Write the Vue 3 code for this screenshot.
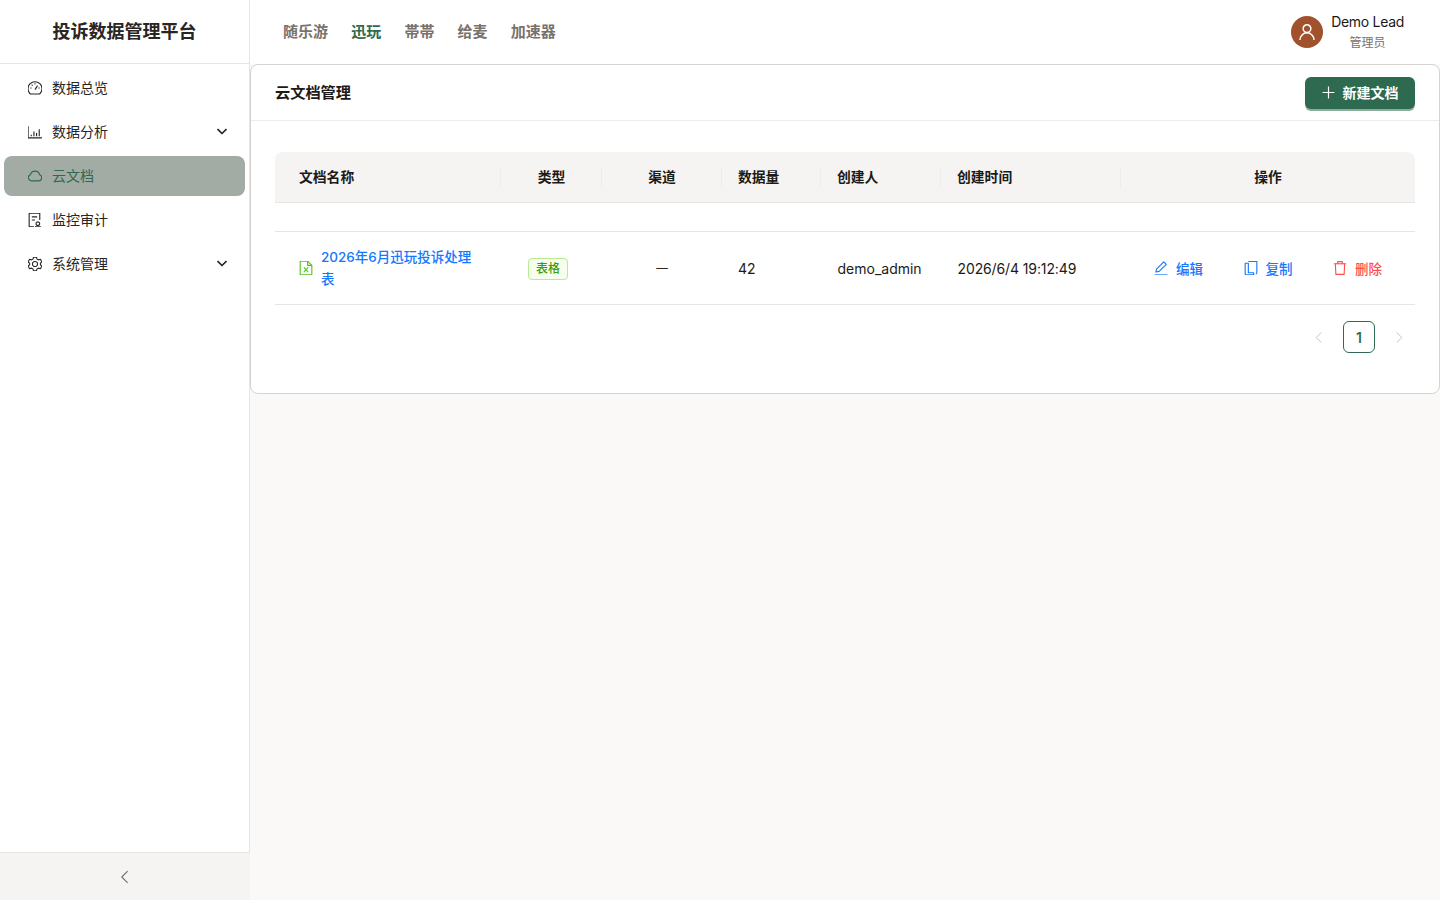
<script setup>
const icons = {
  dashboard: ['M3.2 13.2A6.6 6.6 0 1 1 12.8 13.2Q12.4 13.6 11.8 13.6H4.2Q3.6 13.6 3.2 13.2Z', 'M8 9.5L10.4 5.8', 'M3.6 8H4.8M11.2 8H12.4M8 3.6V4.8M4.9 4.9L5.7 5.7'],
  chart: ['M1.5 2.5V13.5H14.5', 'M4.5 10.5V12M7 7.5V12M9.5 9V12M12 5.5V12'],
  cloud: ['M4.6 12.6H11.4A3 3 0 0 0 12.4 6.8 4.5 4.5 0 0 0 3.7 6.8 3 3 0 0 0 4.6 12.6Z'],
  audit: ['M7 14.5H2.5V1.5H12.5V8', 'M5 5H10M5 8H8', 'M9 11.5A1.7 1.7 0 1 1 12.4 11.5 1.7 1.7 0 1 1 9 11.5ZM8 14.5H13.5'],
  setting: ['M6.6 1.5H9.4L9.9 3.4 11.2 4.1 13.1 3.6 14.5 6 13.1 7.3V8.7L14.5 10 13.1 12.4 11.2 11.9 9.9 12.6 9.4 14.5H6.6L6.1 12.6 4.8 11.9 2.9 12.4 1.5 10 2.9 8.7V7.3L1.5 6 2.9 3.6 4.8 4.1 6.1 3.4Z', 'M5.6 8A2.4 2.4 0 1 0 10.4 8 2.4 2.4 0 1 0 5.6 8Z'],
  edit: ['M2 14.5H14', 'M3.2 11.8L3.8 9 10.6 2.2 13 4.6 6.2 11.2Z'],
  copy: ['M5.5 1.8H13.5V12.5Q13.5 13.5 12.5 13.5', 'M2.5 3.5H5.5V12.5H10.5V14.5H3.5Q2.5 14.5 2.5 13.5Z'],
  trash: ['M2.5 4H13.5', 'M5.8 4V2H10.2V4', 'M3.6 4L4.1 14H11.9L12.4 4'],
  excel: ['M2.5 1.5H9.5L13.5 5.5V14.5H2.5Z', 'M9.5 1.5V5.5H13.5', 'M6 7.5L10 12M10 7.5L6 12'],
  plus: ['M8 2V14M2 8H14'],
  user: ['M4.8 5.2A3.2 3.2 0 1 0 11.2 5.2 3.2 3.2 0 1 0 4.8 5.2Z', 'M2.2 14.5A5.8 5.8 0 0 1 13.8 14.5'],
  down: ['M3.5 6L8 10.5 12.5 6'],
  left: ['M10.5 2.5L5 8 10.5 13.5'],
  right: ['M5.5 2.5L11 8 5.5 13.5']
}
const box = '1.4 1.4 13.2 13.2'
const menu = [
  { label: '数据总览', icon: 'dashboard' },
  { label: '数据分析', icon: 'chart', arrow: true },
  { label: '云文档', icon: 'cloud', active: true },
  { label: '监控审计', icon: 'audit' },
  { label: '系统管理', icon: 'setting', arrow: true }
]
const tabs = [
  { label: '随乐游' },
  { label: '迅玩', active: true },
  { label: '帯帯' },
  { label: '给麦' },
  { label: '加速器' }
]
const columns = [
  { label: '文档名称', cls: 'first' },
  { label: '类型', cls: 'center' },
  { label: '渠道', cls: 'center' },
  { label: '数据量' },
  { label: '创建人' },
  { label: '创建时间' },
  { label: '操作', cls: 'center' }
]
const actions = [
  { label: '编辑', icon: 'edit', cls: 'blue' },
  { label: '复制', icon: 'copy', cls: 'blue' },
  { label: '删除', icon: 'trash', cls: 'red' }
]
</script>

<template>
  <div class="app">
    <aside class="sidebar">
      <div class="logo">投诉数据管理平台</div>
      <nav class="menu">
        <div v-for="m in menu" :key="m.label" class="menu-item" :class="{ active: m.active }">
          <svg class="ic" :viewBox="box"><path v-for="d in icons[m.icon]" :key="d" :d="d" /></svg>
          <span class="menu-label">{{ m.label }}</span>
          <svg v-if="m.arrow" class="ic arrow" viewBox="3 3 10 10"><path :d="icons.down[0]" /></svg>
        </div>
      </nav>
      <div class="collapse">
        <svg class="ic" :viewBox="box"><path :d="icons.left[0]" /></svg>
      </div>
    </aside>

    <div class="main">
      <header class="topbar">
        <div class="tabs">
          <span v-for="t in tabs" :key="t.label" class="tab" :class="{ active: t.active }">{{ t.label }}</span>
        </div>
        <div class="user">
          <div class="avatar">
            <svg class="ic" :viewBox="box"><path v-for="d in icons.user" :key="d" :d="d" /></svg>
          </div>
          <div class="user-text">
            <div class="user-name">Demo Lead</div>
            <div class="user-role">管理员</div>
          </div>
        </div>
      </header>

      <section class="card">
        <div class="card-head">
          <span class="card-title">云文档管理</span>
          <button class="new-btn">
            <svg class="ic" :viewBox="box"><path :d="icons.plus[0]" /></svg>
            <span class="btn-text">新建文档</span>
          </button>
        </div>
        <div class="card-body">
          <table class="table">
            <colgroup>
              <col class="c1" /><col class="c2" /><col class="c3" /><col class="c4" /><col class="c5" /><col class="c6" /><col />
            </colgroup>
            <thead>
              <tr>
                <th v-for="c in columns" :key="c.label" :class="c.cls">{{ c.label }}</th>
              </tr>
            </thead>
            <tbody>
              <tr class="measure"><td colspan="7"></td></tr>
              <tr class="row">
                <td class="first">
                  <div class="name-cell">
                    <svg class="ic excel" :viewBox="box"><path v-for="d in icons.excel" :key="d" :d="d" /></svg>
                    <a class="doc-link">2026年6月迅玩投诉处理表</a>
                  </div>
                </td>
                <td class="type-cell"><span class="tag">表格</span></td>
                <td class="center dash">—</td>
                <td>42</td>
                <td class="creator">demo_admin</td>
                <td class="time">2026/6/4 19:12:49</td>
                <td class="ops-cell">
                  <div class="ops">
                    <span v-for="a in actions" :key="a.label" class="op" :class="a.cls">
                      <svg class="ic" :viewBox="box"><path v-for="d in icons[a.icon]" :key="d" :d="d" /></svg>
                      {{ a.label }}
                    </span>
                  </div>
                </td>
              </tr>
            </tbody>
          </table>
          <div class="pager">
            <span class="page-arrow"><svg class="ic" viewBox="3 2 10 12"><path :d="icons.left[0]" /></svg></span>
            <span class="page-num">1</span>
            <span class="page-arrow"><svg class="ic" viewBox="3 2 10 12"><path :d="icons.right[0]" /></svg></span>
          </div>
        </div>
      </section>
    </div>
  </div>
</template>

<style>
body {
  margin: 0;
  background: #faf8f6;
}
</style>

<style scoped>
.app {
  display: flex;
  min-height: 100vh;
  font-family: Inter, "Noto Sans CJK SC", sans-serif;
  font-size: 14px;
  color: #1c1917;
  background: #faf9f7;
}
.ic {
  width: 14px;
  height: 14px;
  flex: none;
  fill: none;
  stroke: currentColor;
  stroke-width: 1.05;
  stroke-linejoin: round;
}
.sidebar {
  width: 250px;
  flex: none;
  display: flex;
  flex-direction: column;
  background: #fff;
  box-sizing: border-box;
  border-right: 1px solid #e7e5e2;
  height: 100vh;
}
.logo {
  height: 64px;
  box-sizing: border-box;
  border-bottom: 1px solid #e7e5e2;
  display: flex;
  align-items: center;
  justify-content: center;
  font-size: 18px;
  font-weight: 600;
  padding-bottom: 4px;
  color: #292524;
}
.menu {
  flex: 1;
  padding: 4px 4px 0;
  display: flex;
  flex-direction: column;
  gap: 4px;
}
.menu-item {
  height: 40px;
  width: 241px;
  box-sizing: border-box;
  display: flex;
  align-items: center;
  padding: 0 18px 0 24px;
  border-radius: 8px;
  gap: 10px;
  color: #292524;
}
.menu-item.active {
  background: #a2aba4;
  color: #2d6a4f;
}
.menu-label {
  flex: 1;
  padding-bottom: 2px;
}
.arrow {
  width: 10px;
  height: 10px;
  stroke-width: 1.7;
  color: #292524;
  margin-top: -2px;
}
.collapse {
  height: 48px;
  box-sizing: border-box;
  margin-right: -1px;
  border-top: 1px solid #e7e5e2;
  background: #f5f4f2;
  display: flex;
  align-items: center;
  justify-content: center;
  color: #78716c;
}
.main {
  flex: 1;
  min-width: 0;
}
.topbar {
  height: 64px;
  background: #fff;
  display: flex;
  align-items: center;
  justify-content: space-between;
  padding: 0 36px 0 33px;
}
.tabs {
  display: flex;
  gap: 23.2px;
  padding-bottom: 4px;
}
.tab {
  font-size: 15px;
  font-weight: 600;
  color: #78716c;
}
.tab.active {
  color: #2d6a4f;
  font-weight: 700;
}
.user {
  display: flex;
  align-items: center;
  gap: 8px;
}
.avatar {
  width: 32px;
  height: 32px;
  border-radius: 50%;
  background: #a0522d;
  color: #fff;
  display: flex;
  align-items: center;
  justify-content: center;
}
.avatar .ic {
  width: 16px;
  height: 16px;
  stroke-width: 1.2;
}
.user-text {
  text-align: center;
}
.user-name {
  line-height: 20px;
  letter-spacing: -0.3px;
}
.user-role {
  font-size: 12px;
  line-height: 20px;
  color: #78716c;
  padding-top: 1px;
}
.card {
  background: #fff;
  border: 1px solid #d6d3ce;
  border-radius: 8px;
  box-sizing: border-box;
  height: 330px;
}
.card-head {
  height: 56px;
  box-sizing: border-box;
  border-bottom: 1px solid #eeece9;
  display: flex;
  align-items: center;
  justify-content: space-between;
  padding: 0 24px;
}
.card-title {
  font-size: 15.2px;
  font-weight: 600;
  padding-bottom: 4px;
}
.new-btn {
  width: 110px;
  height: 32px;
  padding: 0;
  border: 0;
  border-radius: 6px;
  background: #2d6a4f;
  box-shadow: 0 2px 0 rgba(45, 106, 79, 0.55);
  color: #fff;
  font: 600 14px Inter, "Noto Sans CJK SC", sans-serif;
  display: flex;
  align-items: center;
  justify-content: center;
  gap: 8px;
}
.btn-text {
  padding-bottom: 2px;
}
.new-btn .ic {
  stroke-width: 1.2;
  width: 13px;
  height: 13px;
}
.card-body {
  padding: 31px 24px 0;
}
.table {
  width: 100%;
  table-layout: fixed;
  border-collapse: separate;
  border-spacing: 0;
}
.c1 { width: 226px; }
.c2 { width: 101px; }
.c3 { width: 120px; }
.c4 { width: 99px; }
.c5 { width: 120px; }
.c6 { width: 180px; }
th {
  position: relative;
  height: 51px;
  box-sizing: border-box;
  background: #f5f4f2;
  border-bottom: 1px solid #e7e5e2;
  padding: 0 16px 2px;
  text-align: left;
  font-weight: 600;
  font-size: 13.8px;
  color: #1c1917;
}
th:first-child {
  border-top-left-radius: 8px;
}
th:last-child {
  border-top-right-radius: 8px;
}
th:not(:last-child)::before {
  content: "";
  position: absolute;
  right: 0;
  top: 15px;
  width: 1px;
  height: 22px;
  background: #efedea;
}
th.first,
td.first {
  padding-left: 24px;
}
th.center,
td.center {
  text-align: center;
}
td {
  padding: 0 16px;
  border-bottom: 1px solid #e7e5e2;
}
.measure td {
  height: 29px;
  box-sizing: border-box;
  padding: 0;
}
.row td {
  height: 73px;
  box-sizing: border-box;
}
.name-cell {
  display: flex;
  align-items: center;
  gap: 8px;
}
.excel {
  color: #52c41a;
}
.doc-link {
  color: #1677ff;
  width: 156px;
  font-size: 13.5px;
  font-weight: 500;
  line-height: 22px;
  margin-top: -1px;
}
td.type-cell {
  padding-left: 27px;
}
.tag {
  display: inline-block;
  width: 40px;
  height: 22px;
  box-sizing: border-box;
  border: 1px solid #b7eb8f;
  border-radius: 4px;
  background: #f6ffed;
  color: #389e0d;
  font-size: 12px;
  font-weight: 500;
  line-height: 20px;
  text-align: center;
  position: relative;
  top: 1px;
}
td.dash {
  font-size: 11.5px;
  color: #292524;
}
td.creator {
  padding-left: 16.5px;
}
td.time {
  letter-spacing: -0.12px;
  padding-left: 16.5px;
}
td.ops-cell {
  padding: 0 0 0 33px;
}
.ops {
  display: flex;
  gap: 39.5px;
}
.op {
  display: flex;
  align-items: center;
  gap: 8px;
  font-size: 13.5px;
  font-weight: 500;
  width: 50px;
}
.blue { color: #1677ff; }
.red { color: #ff4d4f; }
.pager {
  display: flex;
  justify-content: flex-end;
  gap: 8px;
  margin-top: 16px;
}
.page-arrow,
.page-num {
  width: 32px;
  height: 32px;
  box-sizing: border-box;
  display: flex;
  align-items: center;
  justify-content: center;
}
.page-arrow {
  color: #bfbfbf;
}
.page-arrow .ic {
  width: 10px;
  height: 11px;
}
.page-num {
  border: 1px solid #2d6a4f;
  border-radius: 6px;
  color: #2d6a4f;
  font-weight: 600;
}
</style>
